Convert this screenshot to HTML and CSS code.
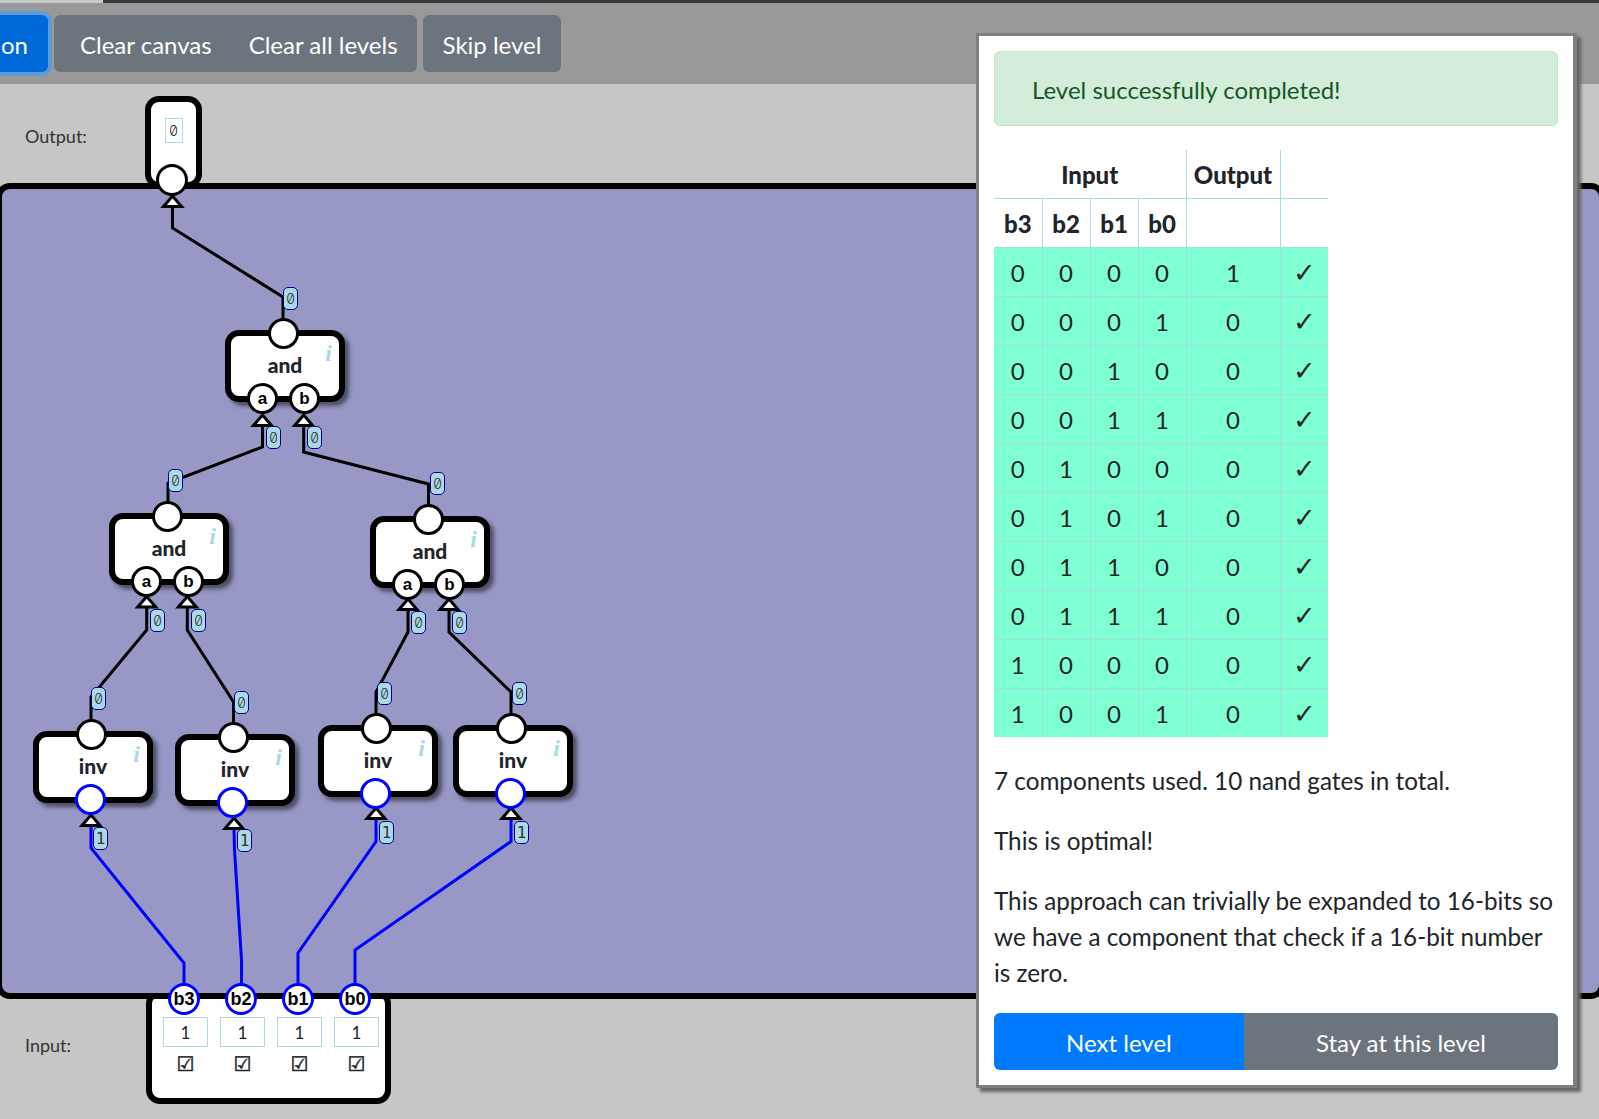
FILE: index.html
```html
<!DOCTYPE html>
<html lang="en">
<head>
<meta charset="utf-8">
<title>Level</title>
<link rel="stylesheet" href="styles.css">
</head>
<body>
<div class="app">
  <div class="topbar"><div class="topbar-fill"></div></div>
  <div class="toolbar">
    <button class="btn btn-primary btn-cut">on</button>
    <div class="btn-group">
      <button class="btn btn-secondary">Clear canvas</button>
      <button class="btn btn-secondary">Clear all levels</button>
    </div>
    <button class="btn btn-secondary btn-solo">Skip level</button>
  </div>

  <div class="diagram">
    <span class="side-label label-output">Output:</span>
    <span class="side-label label-input">Input:</span>
    <div class="output-box"><span class="output-value">0</span></div>
    <div class="input-box">
      <div class="input-cols">
        <div class="input-col"><span class="input-value">1</span><span class="check">☑</span></div>
        <div class="input-col"><span class="input-value">1</span><span class="check">☑</span></div>
        <div class="input-col"><span class="input-value">1</span><span class="check">☑</span></div>
        <div class="input-col"><span class="input-value">1</span><span class="check">☑</span></div>
      </div>
    </div>
    <div class="canvas"></div>
    <span class="pin pin-free output-pin"></span>

    <svg class="wires" width="1599" height="1119" viewBox="0 0 1599 1119">
      <defs><polygon id="tri" points="-9,-1.5 0,-12 9,-1.5"></polygon></defs>
      <g class="wire-off">
        <polyline points="172.5,208 172.5,228 283,297 283,320"></polyline>
        <polyline points="262.5,427 262.5,447 168,483 168,505"></polyline>
        <polyline points="303.7,427 303.7,452 428.5,484 428.5,505"></polyline>
        <polyline points="146.7,608 146.7,630 91,697 91,720"></polyline>
        <polyline points="187.3,608 187.3,630 233.5,702 233.5,725"></polyline>
        <polyline points="408,611 408,632 376,692 376,715"></polyline>
        <polyline points="449,611 449,632 511,692 511,715"></polyline>
      </g>
      <g class="wire-on">
        <polyline points="91,827 91,848 184,963 184,985"></polyline>
        <polyline points="234,830 234.5,850 241.5,960 241.5,985"></polyline>
        <polyline points="376,820 376,841.5 298,953 298,985"></polyline>
        <polyline points="511,820 511,841.5 355,950 355,985"></polyline>
      </g>
      <g class="tris">
        <use href="#tri" x="172.5" y="208"></use>
        <use href="#tri" x="262.5" y="427"></use>
        <use href="#tri" x="303.7" y="427"></use>
        <use href="#tri" x="146.7" y="608.5"></use>
        <use href="#tri" x="187.3" y="608.5"></use>
        <use href="#tri" x="408" y="611"></use>
        <use href="#tri" x="449" y="611"></use>
        <use href="#tri" x="91" y="827"></use>
        <use href="#tri" x="234" y="830"></use>
        <use href="#tri" x="376" y="820"></use>
        <use href="#tri" x="511" y="820"></use>
      </g>
    </svg>

    <div class="node n-and1"><span class="pin pin-out"></span><span class="name">and</span><span class="info">i</span><span class="pin pin-a">a</span><span class="pin pin-b">b</span></div>
    <div class="node n-and2"><span class="pin pin-out"></span><span class="name">and</span><span class="info">i</span><span class="pin pin-a">a</span><span class="pin pin-b">b</span></div>
    <div class="node n-and3"><span class="pin pin-out"></span><span class="name">and</span><span class="info">i</span><span class="pin pin-a">a</span><span class="pin pin-b">b</span></div>
    <div class="node n-inv1"><span class="pin pin-out"></span><span class="name">inv</span><span class="info">i</span><span class="pin pin-in on"></span></div>
    <div class="node n-inv2"><span class="pin pin-out"></span><span class="name">inv</span><span class="info">i</span><span class="pin pin-in on"></span></div>
    <div class="node n-inv3"><span class="pin pin-out"></span><span class="name">inv</span><span class="info">i</span><span class="pin pin-in on"></span></div>
    <div class="node n-inv4"><span class="pin pin-out"></span><span class="name">inv</span><span class="info">i</span><span class="pin pin-in on"></span></div>

    <span class="pin pin-free on src s3">b3</span>
    <span class="pin pin-free on src s2">b2</span>
    <span class="pin pin-free on src s1">b1</span>
    <span class="pin pin-free on src s0">b0</span>

    <span class="val v1">0</span>
    <span class="val v2">0</span>
    <span class="val v3">0</span>
    <span class="val v4">0</span>
    <span class="val v5">0</span>
    <span class="val v6">0</span>
    <span class="val v7">0</span>
    <span class="val v8">0</span>
    <span class="val v9">0</span>
    <span class="val v10">0</span>
    <span class="val v11">0</span>
    <span class="val v12">0</span>
    <span class="val v13">0</span>
    <span class="val val-on v14">1</span>
    <span class="val val-on v15">1</span>
    <span class="val val-on v16">1</span>
    <span class="val val-on v17">1</span>
  </div>

  <aside class="panel">
    <div class="alert">Level successfully completed!</div>
    <table class="truth">
      <colgroup>
        <col class="col-bit"><col class="col-bit"><col class="col-bit"><col class="col-bit"><col class="col-out"><col class="col-chk">
      </colgroup>
      <thead>
        <tr class="head-top"><th colspan="4" class="th-input">Input</th><th>Output</th><th></th></tr>
        <tr><th>b3</th><th>b2</th><th>b1</th><th>b0</th><th></th><th></th></tr>
      </thead>
      <tbody>
        <tr><td>0</td><td>0</td><td>0</td><td>0</td><td>1</td><td class="tick">✓</td></tr>
        <tr><td>0</td><td>0</td><td>0</td><td>1</td><td>0</td><td class="tick">✓</td></tr>
        <tr><td>0</td><td>0</td><td>1</td><td>0</td><td>0</td><td class="tick">✓</td></tr>
        <tr><td>0</td><td>0</td><td>1</td><td>1</td><td>0</td><td class="tick">✓</td></tr>
        <tr><td>0</td><td>1</td><td>0</td><td>0</td><td>0</td><td class="tick">✓</td></tr>
        <tr><td>0</td><td>1</td><td>0</td><td>1</td><td>0</td><td class="tick">✓</td></tr>
        <tr><td>0</td><td>1</td><td>1</td><td>0</td><td>0</td><td class="tick">✓</td></tr>
        <tr><td>0</td><td>1</td><td>1</td><td>1</td><td>0</td><td class="tick">✓</td></tr>
        <tr><td>1</td><td>0</td><td>0</td><td>0</td><td>0</td><td class="tick">✓</td></tr>
        <tr><td>1</td><td>0</td><td>0</td><td>1</td><td>0</td><td class="tick">✓</td></tr>
      </tbody>
    </table>
    <p>7 components used. 10 nand gates in total.</p>
    <p>This is optimal!</p>
    <p class="last">This approach can trivially be expanded to 16-bits so we have a component that check if a 16-bit number is zero.</p>
    <div class="actions">
      <button class="btn btn-primary-plain">Next level</button>
      <button class="btn btn-secondary">Stay at this level</button>
    </div>
  </aside>
</div>
</body>
</html>
```

FILE: styles.css
```css
* { box-sizing: border-box; }
html, body { margin: 0; padding: 0; }
body {
  width: 1599px;
  height: 1119px;
  overflow: hidden;
  background: #c6c6c6;
  font-family: "Lato", "Liberation Sans", sans-serif;
  font-size: 24px;
  line-height: 36px;
  color: #212529;
}
.app { position: relative; width: 1599px; height: 1119px; overflow: hidden; }

.topbar { height: 3px; padding-left: 103px; background: #c8c8c8; }
.topbar-fill { height: 3px; background: #343a40; }

.toolbar {
  height: 81px;
  background: #999999;
  display: flex;
  align-items: flex-start;
  padding-top: 12px;
}
.btn {
  font: inherit;
  height: 57px;
  border: 0;
  padding: 2px 19px 0;
  color: #fff;
  border-radius: 6px;
}
.btn-secondary { background: #6c757d; }
.btn-primary {
  background: #0069d9;
  box-shadow: 0 0 0 4px #5f9bd6;
}
.btn-cut {
  width: 48px;
  padding: 2px 20px 0 0;
  border-radius: 0 6px 6px 0;
  text-align: right;
  margin-right: 6px;
}
.btn-group { display: flex; margin-right: 6px; }
.btn-group .btn:first-child { border-radius: 6px 0 0 6px; padding-left: 26px; padding-right: 18px; }
.btn-group .btn:last-child { border-radius: 0 6px 6px 0; }
.btn-solo { padding-left: 20px; padding-right: 20px; }

.diagram { position: absolute; left: 0; top: 0; width: 1599px; height: 1119px; }
.side-label { position: absolute; left: 25px; font-size: 18px; line-height: 24px; color: #333; }
.label-output { top: 124px; }
.label-input { top: 1033px; }

.canvas {
  position: absolute;
  left: -4px;
  top: 183px;
  width: 1609px;
  height: 816px;
  background: #9898c6;
  border: 6px solid #000;
  border-radius: 14px;
}
.output-box {
  position: absolute;
  left: 145px;
  top: 96px;
  width: 57px;
  height: 92px;
  background: #fff;
  border: 6px solid #000;
  border-radius: 14px;
  display: flex;
  justify-content: center;
  align-items: flex-start;
  padding-top: 16px;
}
.output-value {
  width: 18px;
  height: 25px;
  border: 1px solid #add8e6;
  font-family: "Inter", "DejaVu Sans Mono", monospace;
  font-feature-settings: "zero" 1;
  font-weight: 300;
  font-size: 14px;
  line-height: 23px;
  text-align: center;
}
.input-box {
  position: absolute;
  left: 146px;
  top: 990px;
  width: 245px;
  height: 114px;
  background: #fff;
  border: 6px solid #000;
  border-radius: 14px;
  padding: 21px 0 0 11px;
}
.input-cols { display: flex; gap: 12px; }
.input-col { width: 45px; display: flex; flex-direction: column; align-items: center; }
.input-value {
  width: 45px;
  height: 30px;
  border: 1px solid #add8e6;
  font-size: 17px;
  line-height: 30px;
  text-align: center;
}
.check {
  font-family: "DejaVu Sans", sans-serif;
  font-weight: 700;
  font-size: 20px;
  line-height: 24px;
  margin-top: 5px;
  -webkit-text-stroke: 0.5px #212529;
}

.wires { position: absolute; left: 0; top: 0; }
.wires polyline { fill: none; stroke-width: 3; stroke-linejoin: miter; }
.wire-off polyline { stroke: #000; }
.wire-on polyline { stroke: #0000ff; }
.tris use { fill: #fff; stroke: #000; stroke-width: 3; }

.node {
  position: absolute;
  width: 120px;
  height: 72px;
  background: #fff;
  border: 6px solid #000;
  border-radius: 14px;
  box-shadow: 4px 4px 4px rgba(0, 0, 0, 0.5);
  display: flex;
  justify-content: center;
  align-items: center;
  padding-bottom: 2px;
}
.n-and1 { left: 225px; top: 330px; }
.n-and2 { left: 109px; top: 513px; }
.n-and3 { left: 370px; top: 516px; }
.n-inv1 { left: 33px; top: 731px; }
.n-inv2 { left: 175px; top: 734px; }
.n-inv3 { left: 318px; top: 725px; }
.n-inv4 { left: 453px; top: 725px; }

.name { font-size: 21px; font-weight: 900; line-height: 24px; color: #212529; }
.info {
  position: absolute;
  right: 7px;
  top: 2px;
  font-family: "Liberation Serif", serif;
  font-style: italic;
  font-weight: 700;
  font-size: 24px;
  line-height: 30px;
  color: #add8e6;
}
.pin {
  position: absolute;
  width: 31px;
  height: 31px;
  border-radius: 50%;
  background: #fff;
  border: 3px solid #000;
  display: flex;
  justify-content: center;
  align-items: center;
  font-family: "Liberation Sans", sans-serif;
  font-weight: 700;
  font-size: 17px;
  line-height: 1;
  color: #000;
}
.pin.on { border-color: #0000ff; }
.pin-out { left: 37px; top: -18px; }
.pin-in { left: 36px; top: 47px; }
.pin-a { left: 16px; top: 47px; }
.pin-b { left: 58px; top: 47px; }
.pin-free { display: flex; }
.output-pin { left: 156px; top: 164px; width: 32px; height: 32px; }
.src { top: 983px; width: 32px; height: 32px; border-width: 3.5px; font-size: 18px; }
.s3 { left: 168px; }
.s2 { left: 225px; }
.s1 { left: 282px; }
.s0 { left: 339px; }

.val {
  position: absolute;
  width: 15px;
  height: 23px;
  background: #add8e6;
  border: 1px solid #00008b;
  border-radius: 5px;
  font-family: "Inter", "DejaVu Sans Mono", monospace;
  font-feature-settings: "zero" 1;
  font-weight: 300;
  font-size: 14px;
  line-height: 21px;
  text-align: center;
  color: #333;
}
.val-on { font-family: "DejaVu Sans Mono", monospace; font-size: 16px; font-weight: 400; }
.v1 { left: 283px; top: 287px; }
.v2 { left: 266px; top: 426px; }
.v3 { left: 307px; top: 426px; }
.v4 { left: 168px; top: 469px; }
.v5 { left: 430px; top: 472px; }
.v6 { left: 150px; top: 609px; }
.v7 { left: 191px; top: 609px; }
.v8 { left: 411px; top: 611px; }
.v9 { left: 452px; top: 611px; }
.v10 { left: 91px; top: 687px; }
.v11 { left: 234px; top: 691px; }
.v12 { left: 377px; top: 682px; }
.v13 { left: 512px; top: 682px; }
.v14 { left: 93px; top: 827px; }
.v15 { left: 237px; top: 829px; }
.v16 { left: 379px; top: 821px; }
.v17 { left: 514px; top: 821px; }

.panel {
  position: absolute;
  left: 976px;
  top: 33px;
  width: 601px;
  height: 1055px;
  background: #fff;
  border: solid #808080;
  border-width: 3px 4px 3px 3px;
  box-shadow: 4px 4px 3px #666;
  padding: 15px;
}
.alert {
  height: 75px;
  background: #d4edda;
  border: 1px solid #c3e6cb;
  border-radius: 6px;
  color: #155724;
  padding: 20px 37px 0;
  margin-bottom: 24px;
}
.truth {
  border-collapse: collapse;
  table-layout: fixed;
  width: 334px;
  margin-bottom: 26px;
}
.col-bit { width: 48px; }
.col-out { width: 94px; }
.col-chk { width: 48px; }
.truth th, .truth td {
  height: 49px;
  padding: 2px 0 0;
  text-align: center;
  border: 1px solid #add8e6;
}
.truth th { font-weight: 900; }
.truth tr > :first-child { border-left: 0; }
.truth tr > :last-child { border-right: 0; }
.truth tbody tr:last-child td { border-bottom: 0; }
.head-top th { border-top: 0; height: 48px; }
.truth td { background: #7fffd4; }
.tick { font-family: "DejaVu Sans", sans-serif; font-weight: 700; font-size: 27px; padding-left: 2px; }
.panel p { margin: 0 0 24px; font-size: 24.25px; }
.panel p.last { margin-bottom: 22px; }
.actions { display: flex; }
.actions .btn { flex: 1 1 auto; border-radius: 0; }
.actions .btn:first-child { border-radius: 6px 0 0 6px; }
.actions .btn:last-child { border-radius: 0 6px 6px 0; }
.btn-primary-plain { background: #007bff; }
```
